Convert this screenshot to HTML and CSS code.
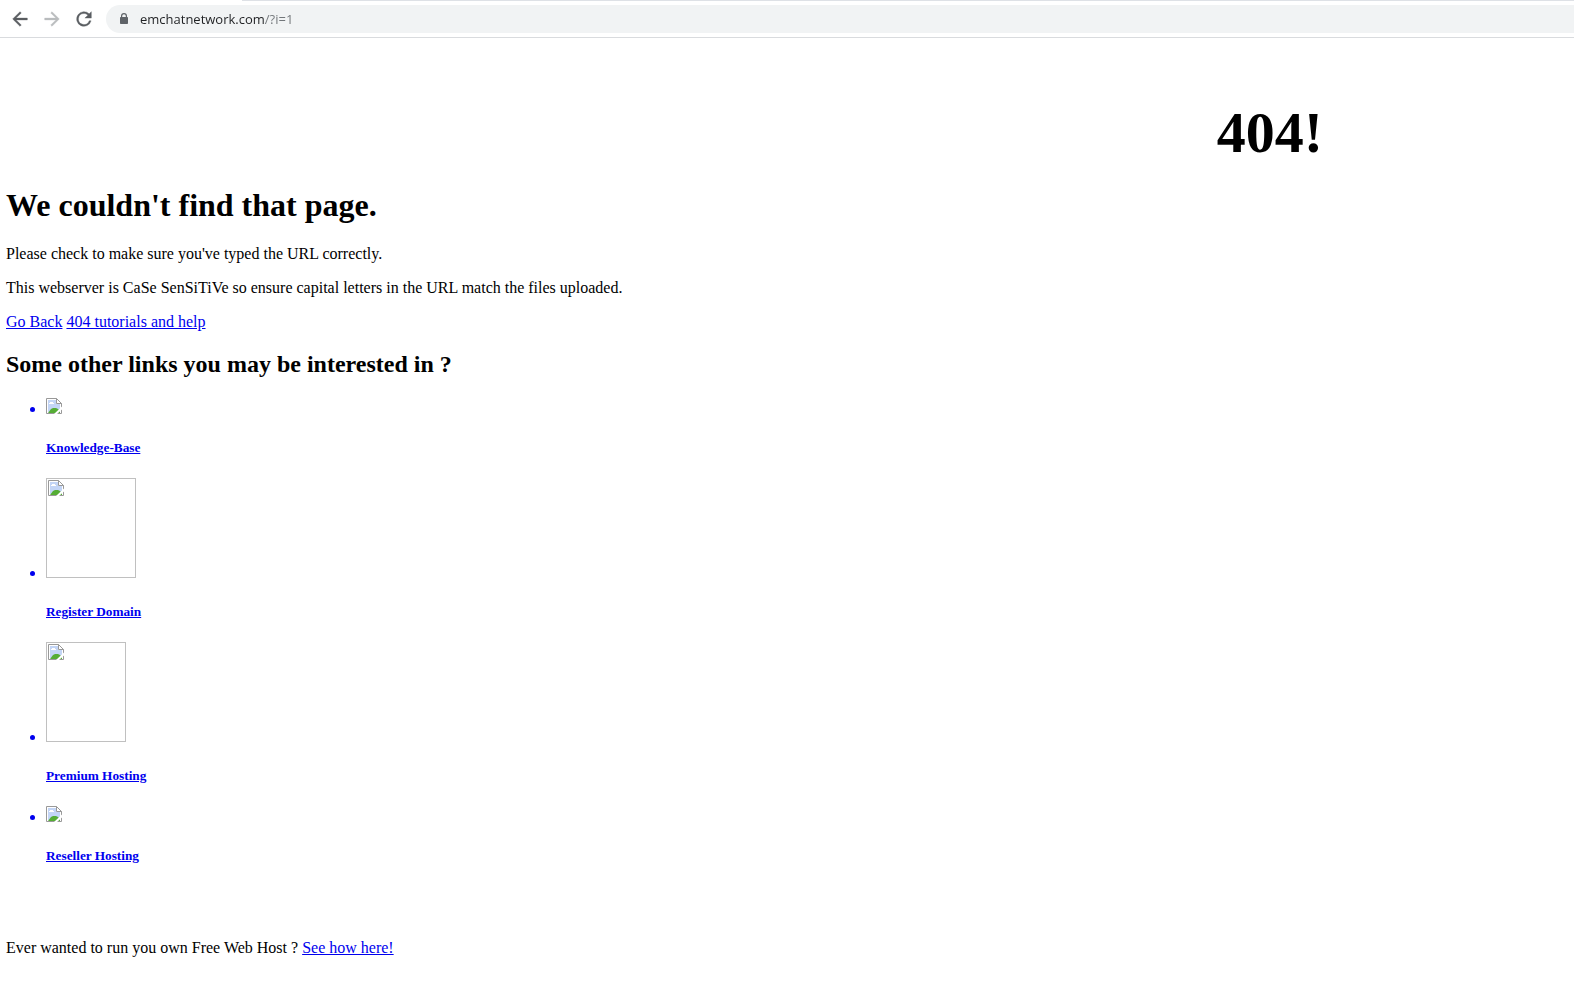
FILE: index.html
```html
<!DOCTYPE html>
<html lang="en">
<head>
    <meta charset="UTF-8">
    <title>404 - Page not found</title>
    <link rel="stylesheet" href="styles.css">
</head>
<body>
    <svg class="defs" width="0" height="0" aria-hidden="true">
        <symbol id="broken" viewBox="0 0 16 16">
            <path d="M0 0h11l5 5v11H0z" fill="#fff"/>
            <path d="M2 2h8v4h4v8H2z" fill="#c3d5f6"/>
            <path d="M3 6V5h1V4h3v1h1v1z" fill="#fff"/>
            <path d="M2 15L5 11L7 10L10 10L12 11L14 13L14 15Z" fill="#55ad35"/>
            <path d="M.5 15.5V.5h10l5 5v10z" fill="none" stroke="#999"/>
            <path d="M10.5 .5v5h5z" fill="#fff" stroke="#999"/>
            <path d="M16 8.5v3L11 16H8z" fill="#fff"/>
        </symbol>
    </svg>

    <header class="toolbar">
        <button class="nav-button" type="button" aria-label="Back">
            <svg viewBox="0 0 24 24"><path d="M20 11H7.800l5.600-5.600L12 4l-8 8 8 8 1.400-1.400L7.800 13H20z"/></svg>
        </button>
        <button class="nav-button forward" type="button" aria-label="Forward">
            <svg viewBox="0 0 24 24"><path d="M12 4l-1.400 1.400 5.600 5.600H4v2h12.200l-5.600 5.600L12 20l8-8z"/></svg>
        </button>
        <button class="nav-button" type="button" aria-label="Reload">
            <svg viewBox="0 0 24 24"><path d="M17.650 6.350A8 8 0 1 0 19.730 14h-2.080A6 6 0 1 1 12 6c1.660 0 3.140.69 4.220 1.780L13 11h7V4z"/></svg>
        </button>
        <div class="address">
            <svg class="lock" viewBox="0 0 8 11"><path d="M1 4V3a3 3 0 0 1 6 0v1h.2a.8.8 0 0 1 .8.8v5.400a.8.8 0 0 1-.8.8H.8a.8.8 0 0 1-.8-.8V4.800A.8.8 0 0 1 .8 4zm1.200 0h3.600V3a1.800 1.800 0 0 0-3.600 0z"/></svg>
            <input class="url" type="text" value="emchatnetwork.com/?i=1" aria-label="Address" spellcheck="false">
        </div>
    </header>

    <main class="page">
        <div class="code">404!</div>
        <h1>We couldn't find that page.</h1>
        <p>Please check to make sure you've typed the URL correctly.</p>
        <p>This webserver is CaSe SenSiTiVe so ensure capital letters in the URL match the files uploaded.</p>
        <p><a href="#">Go Back</a> <a href="#">404 tutorials and help</a></p>

        <h2>Some other links you may be interested in ?</h2>
        <ul class="links">
            <li>
                <a href="#"><svg class="icon"><use href="#broken"/></svg><h5>Knowledge-Base</h5></a>
            </li>
            <li>
                <a href="#"><span class="picture domain"><svg class="icon"><use href="#broken"/></svg></span><h5>Register Domain</h5></a>
            </li>
            <li>
                <a href="#"><span class="picture premium"><svg class="icon"><use href="#broken"/></svg></span><h5>Premium Hosting</h5></a>
            </li>
            <li>
                <a href="#"><svg class="icon"><use href="#broken"/></svg><h5>Reseller Hosting</h5></a>
            </li>
        </ul>

        <p class="footer">Ever wanted to run you own Free Web Host ? <a href="#">See how here!</a></p>
    </main>
</body>
</html>
```
FILE: styles.css
```css
body {
    margin: 0;
    background-color: #fff;
    color: #000;
    font-family: "Liberation Serif", "Times New Roman", serif;
    font-size: 16px;
    line-height: 18px;
}
.defs {
    position: absolute;
}

/* browser toolbar */
.toolbar {
    display: flex;
    align-items: center;
    box-sizing: border-box;
    height: 38px;
    padding-left: 4px;
    border-bottom: 1px solid #d9dbde;
    background: linear-gradient(#dee1e6, #dee1e6) 242px 0 / 100% 1px no-repeat;
}
.nav-button {
    display: flex;
    align-items: center;
    justify-content: center;
    width: 32px;
    height: 32px;
    padding: 0;
    border: none;
    background: none;
}
.nav-button svg {
    width: 22px;
    height: 22px;
    fill: #5a5d61;
    stroke: #5a5d61;
    stroke-width: 0.4;
}
.forward svg {
    fill: #babcbe;
    stroke: #babcbe;
}
.address {
    flex: 1;
    display: flex;
    align-items: center;
    gap: 12px;
    height: 28px;
    margin-left: 6px;
    padding-left: 14px;
    border-radius: 14px 0 0 14px;
    background-color: #f1f3f4;
}
.lock {
    width: 8px;
    height: 11px;
    fill: #5f6368;
}
.url {
    flex: 1;
    padding: 0;
    border: none;
    outline: none;
    /* host is dark, the path after it is grey */
    background: linear-gradient(90deg, #202124 125px, #72767a 125px);
    background-clip: text;
    -webkit-background-clip: text;
    color: transparent;
    font-family: "Open Sans", "Noto Sans", sans-serif;
    font-size: 13px;
    line-height: 20px;
}

/* page */
.page {
    padding: 0 6px;
}
.code {
    padding: 63px 245px 0 0;
    text-align: right;
    font-size: 58px;
    font-weight: bold;
    line-height: 64px;
}
h1 {
    margin: 22px 0;
    font-size: 32px;
    line-height: 36px;
}
p {
    margin: 16px 0;
}
h2 {
    margin: 19px 0 20px;
    font-size: 24px;
    line-height: 28px;
}
a {
    color: #0000ee;
}
.links {
    margin: 0;
    padding-left: 40px;
    color: #0000ee;
}
.icon {
    width: 16px;
    height: 16px;
}
.picture {
    display: inline-block;
    overflow: hidden;
    box-sizing: border-box;
    height: 100px;
    padding: 1px;
    border: 1px solid #c0c0c0;
}
.picture .icon {
    display: block;
}
.domain {
    width: 90px;
}
.premium {
    width: 80px;
}
h5 {
    margin: 22px 0;
    line-height: 16px;
}
.footer {
    margin: 75px 0 28px;
}
```
